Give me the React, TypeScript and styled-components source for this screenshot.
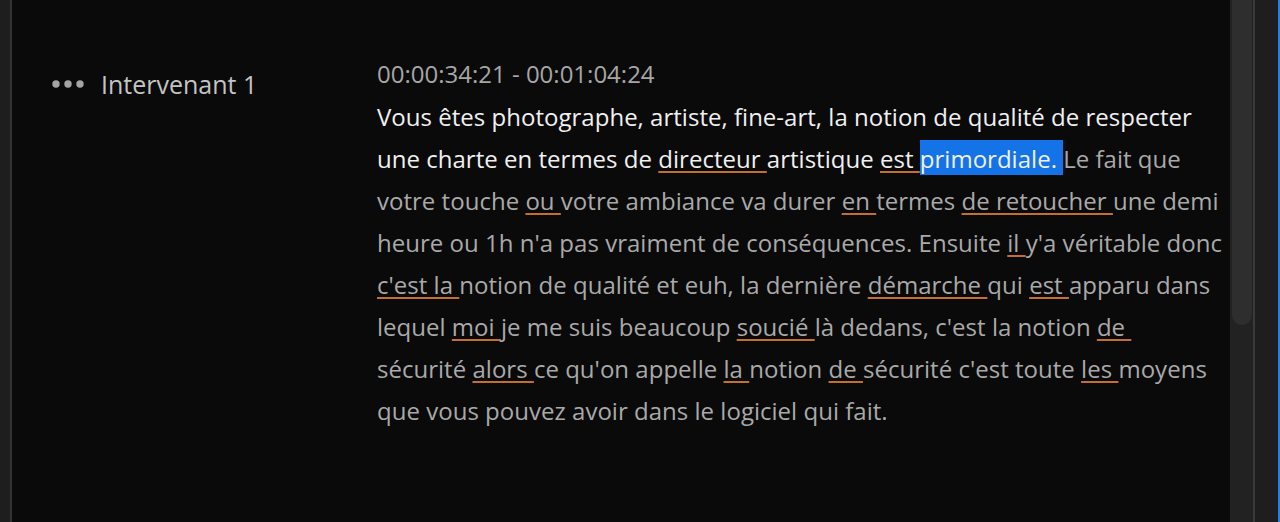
import React from "react";
import styled, { createGlobalStyle } from "styled-components";

const Global = createGlobalStyle`
  html, body { margin: 0; padding: 0; background: #0a0a0a; }
  body { width: 1280px; height: 522px; overflow: hidden; font-family: "Open Sans", "Liberation Sans", sans-serif; }
`;

const Frame = styled.div`
  display: flex;
  width: 1280px;
  height: 522px;
`;

const LeftStrip = styled.div`
  width: 10px;
  background: #1e1e1e;
  border-right: 2px solid #333;
`;

const Panel = styled.div`
  flex: 1;
  background: #0a0a0a;
  display: grid;
  grid-template-columns: 325px 1fr;
  align-content: start;
  padding: 59px 0 0 40px;
`;

const Speaker = styled.div`
  display: flex;
  align-items: center;
  gap: 17px;
  height: 30px;
  margin-top: 10px;
`;

const Name = styled.span`
  font-size: 25px;
  line-height: 30px;
  color: #c4c4c4;
`;

const Content = styled.div`
  display: flex;
  flex-direction: column;
`;

const Time = styled.div`
  font-size: 24px;
  line-height: 30px;
  margin-bottom: 7px;
  color: #a6a6a6;
`;

const Line = styled.div`
  font-size: 24px;
  line-height: 42px;
  white-space: pre;
  color: #a9a9a9;
  letter-spacing: 0.02px;
`;

const W = styled.span<{ $bright?: boolean; $u?: boolean; $hl?: boolean }>`
  color: ${(p) => (p.$bright || p.$hl ? "#f0f0f0" : "inherit")};
  background: ${(p) => (p.$hl ? "#1473e6" : "transparent")};
  padding: ${(p) => (p.$hl ? "2px 0 0" : "0")};
  text-decoration: ${(p) => (p.$u ? "underline" : "none")};
  text-decoration-color: #c26f30;
  text-decoration-thickness: 2px;
  text-underline-offset: 3px;
  text-decoration-skip-ink: none;
`;

const ScrollTrack = styled.div`
  width: 25px;
  box-sizing: border-box;
  background: #222;
  padding: 0 1px 0 2px;
  border-right: 2px solid #3a3a3a;
`;

const Thumb = styled.div`
  height: 325px;
  background: #2e2e2e;
  border-radius: 0 0 10px 10px;
`;

const RightStrip = styled.div`
  width: 23px;
  background: #1e1e1e;
  border-right: 2px solid #2680eb;
`;

const Dots = () => (
  <svg width="32" height="8" viewBox="0 0 32 8">
    <circle cx="4" cy="4" r="3.7" fill="#a4a4a4" />
    <circle cx="16" cy="4" r="3.7" fill="#a4a4a4" />
    <circle cx="28" cy="4" r="3.7" fill="#a4a4a4" />
  </svg>
);

export default function App() {
  return (
    <>
      <Global />
      <Frame>
        <LeftStrip />
        <Panel>
          <Speaker>
            <Dots />
            <Name>Intervenant 1</Name>
          </Speaker>
          <Content>
            <Time>00:00:34:21 - 00:01:04:24</Time>
            <Line>
              <W $bright>Vous êtes photographe, artiste, fine-art, la notion de qualité de respecter</W>
            </Line>
            <Line>
              <W $bright>une charte en termes de </W>
              <W $bright $u>directeur </W>
              <W $bright>artistique </W>
              <W $bright $u>est </W>
              <W $hl>primordiale. </W>
              Le fait que
            </Line>
            <Line>
              votre touche <W $u>ou </W>votre ambiance va durer <W $u>en </W>termes <W $u>de retoucher </W>une demi
            </Line>
            <Line>
              heure ou 1h n'a pas vraiment de conséquences. Ensuite <W $u>il </W>y'a véritable donc
            </Line>
            <Line>
              <W $u>c'est la </W>notion de qualité et euh, la dernière <W $u>démarche </W>qui <W $u>est </W>apparu dans
            </Line>
            <Line>
              lequel <W $u>moi </W>je me suis beaucoup <W $u>soucié </W>là dedans, c'est la notion <W $u>de </W>
            </Line>
            <Line>
              sécurité <W $u>alors </W>ce qu'on appelle <W $u>la </W>notion <W $u>de </W>sécurité c'est toute <W $u>les </W>moyens
            </Line>
            <Line>que vous pouvez avoir dans le logiciel qui fait.</Line>
          </Content>
        </Panel>
        <ScrollTrack>
          <Thumb />
        </ScrollTrack>
        <RightStrip />
      </Frame>
    </>
  );
}
